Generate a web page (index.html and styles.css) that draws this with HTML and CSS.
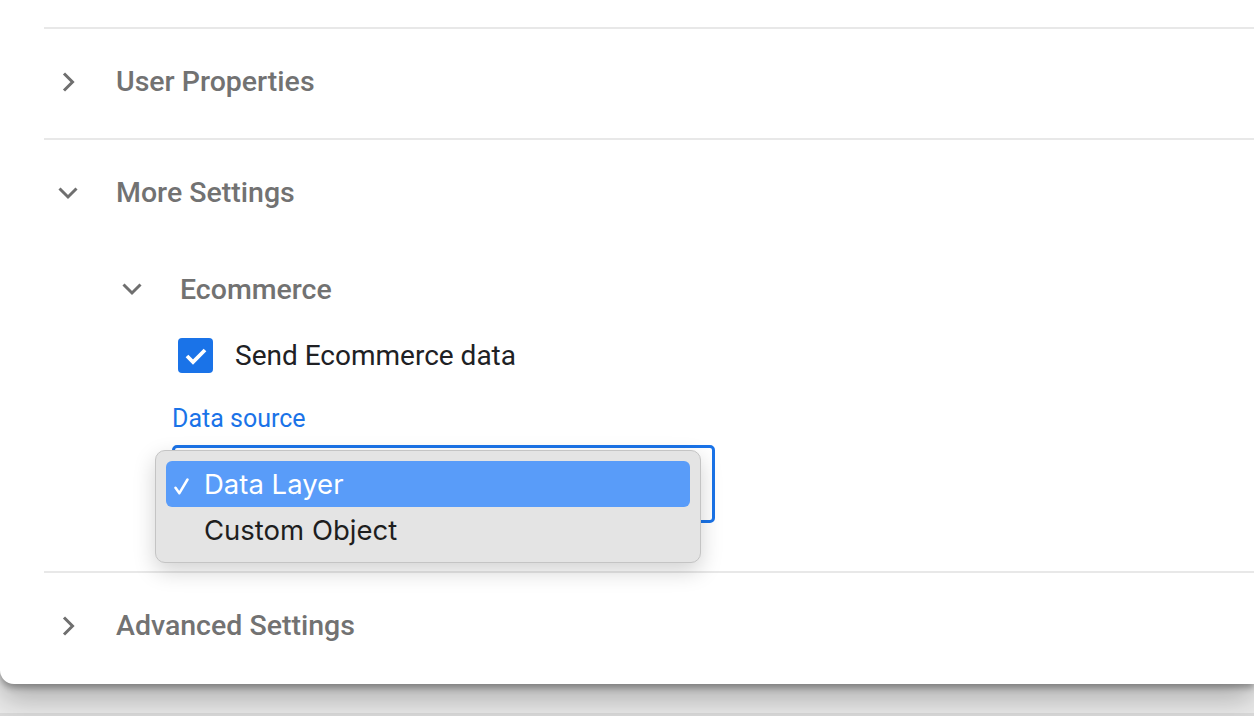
FILE: index.html
```html
<!DOCTYPE html>
<html lang="en">
<head>
<meta charset="utf-8">
<title>Tag settings</title>
<link rel="stylesheet" href="styles.css">
</head>
<body>
<div class="card">
  <section class="panel">
    <div class="panel-head">
      <svg class="chev" width="20" height="20" viewBox="0 0 20 20"><polyline points="6,1.5 14.5,10 6,18.5" /></svg>
      <span class="panel-title">User Properties</span>
    </div>
  </section>
  <section class="panel">
    <div class="panel-head">
      <svg class="chev" width="20" height="20" viewBox="0 0 20 20"><polyline points="1.5,5.5 10,14 18.5,5.5" /></svg>
      <span class="panel-title">More Settings</span>
    </div>
    <div class="panel-body">
      <div class="sub-head">
        <svg class="chev" width="20" height="20" viewBox="0 0 20 20"><polyline points="1.5,5.5 10,14 18.5,5.5" /></svg>
        <span class="panel-title">Ecommerce</span>
      </div>
      <label class="check-row">
        <span class="checkbox">
          <svg width="35" height="35" viewBox="0 0 35 35"><polyline points="9,18 15,24 27,12" /></svg>
        </span>
        <span class="check-label">Send Ecommerce data</span>
      </label>
      <div class="field-label">Data source</div>
      <div class="select-wrap">
        <div class="select-box"></div>
        <div class="menu">
          <div class="menu-item selected">
            <span class="tick"><svg width="15" height="17" viewBox="0 0 15 17"><polyline points="1.5,9.8 5.4,15.2 13.5,1.5" /></svg></span>Data Layer
          </div>
          <div class="menu-item"><span class="tick"></span>Custom Object</div>
        </div>
      </div>
    </div>
  </section>
  <section class="panel">
    <div class="panel-head">
      <svg class="chev" width="20" height="20" viewBox="0 0 20 20"><polyline points="6,1.5 14.5,10 6,18.5" /></svg>
      <span class="panel-title">Advanced Settings</span>
    </div>
  </section>
</div>
<div class="next-card"></div>
</body>
</html>
```

FILE: styles.css
```css
html, body {
  margin: 0;
  padding: 0;
}
body {
  background: #ececec;
  font-family: Roboto, "Liberation Sans", sans-serif;
  overflow: hidden;
  height: 716px;
}
.card {
  background: #ffffff;
  height: 684px;
  box-sizing: border-box;
  padding: 27px 0 0 44px;
  border-radius: 0 0 0 14px;
  box-shadow: 0 4px 6px rgba(0,0,0,0.3), 0 16px 30px rgba(0,0,0,0.26);
  position: relative;
  z-index: 1;
}
.next-card {
  margin-top: 29px;
  height: 3px;
  background: #dcdcdc;
}
.panel {
  border-top: 2px solid #e8e8e8;
}
.panel-head {
  height: 109px;
  box-sizing: border-box;
  padding: 0 0 4px 14px;
  display: flex;
  align-items: center;
  gap: 38px;
}
.chev {
  flex: none;
}
.chev polyline {
  fill: none;
  stroke: #6f6f6f;
  stroke-width: 3;
}
.panel-title {
  font-size: 28.5px;
  font-weight: 500;
  color: #727272;
}
.panel-body {
  padding: 17px 0 48px 0;
}
.sub-head {
  height: 46px;
  display: flex;
  align-items: center;
  padding-left: 78px;
  gap: 38px;
}
.check-row {
  margin-top: 21px;
  height: 44px;
  display: flex;
  align-items: center;
  padding-left: 134px;
  gap: 22px;
}
.checkbox {
  width: 35px;
  height: 35px;
  border-radius: 4px;
  background: #1a73e8;
  display: block;
  flex: none;
}
.checkbox svg {
  display: block;
}
.checkbox polyline {
  fill: none;
  stroke: #ffffff;
  stroke-width: 3.8;
}
.check-label {
  font-size: 28px;
  color: #202124;
}
.field-label {
  margin: 28px 0 0 128px;
  font-size: 25px;
  line-height: 28px;
  color: #1a73e8;
}
.select-wrap {
  margin: 12px 0 0 128px;
  width: 543px;
  position: relative;
}
.select-box {
  height: 78px;
  box-sizing: border-box;
  border: 3px solid #1a73e8;
  border-radius: 5px;
}
.menu {
  position: absolute;
  left: -17px;
  top: 5px;
  width: 546px;
  height: 113px;
  box-sizing: border-box;
  background: #e4e4e4;
  border: 1px solid #c4c4c4;
  border-radius: 10px;
  padding: 10px;
  box-shadow: 0 8px 22px rgba(0,0,0,0.18);
  font-family: Inter, "Liberation Sans", sans-serif;
  font-size: 27.5px;
  color: #1e1e1e;
}
.menu-item {
  height: 46px;
  display: flex;
  align-items: center;
  padding-left: 8px;
  border-radius: 6px;
}
.menu-item.selected {
  background: #599cf9;
  color: #ffffff;
}
.tick {
  width: 30px;
  flex: none;
  display: flex;
}
.tick svg {
  margin-top: 5px;
}
.tick polyline {
  fill: none;
  stroke: #ffffff;
  stroke-width: 2.5;
  stroke-linecap: round;
  stroke-linejoin: round;
}
```
